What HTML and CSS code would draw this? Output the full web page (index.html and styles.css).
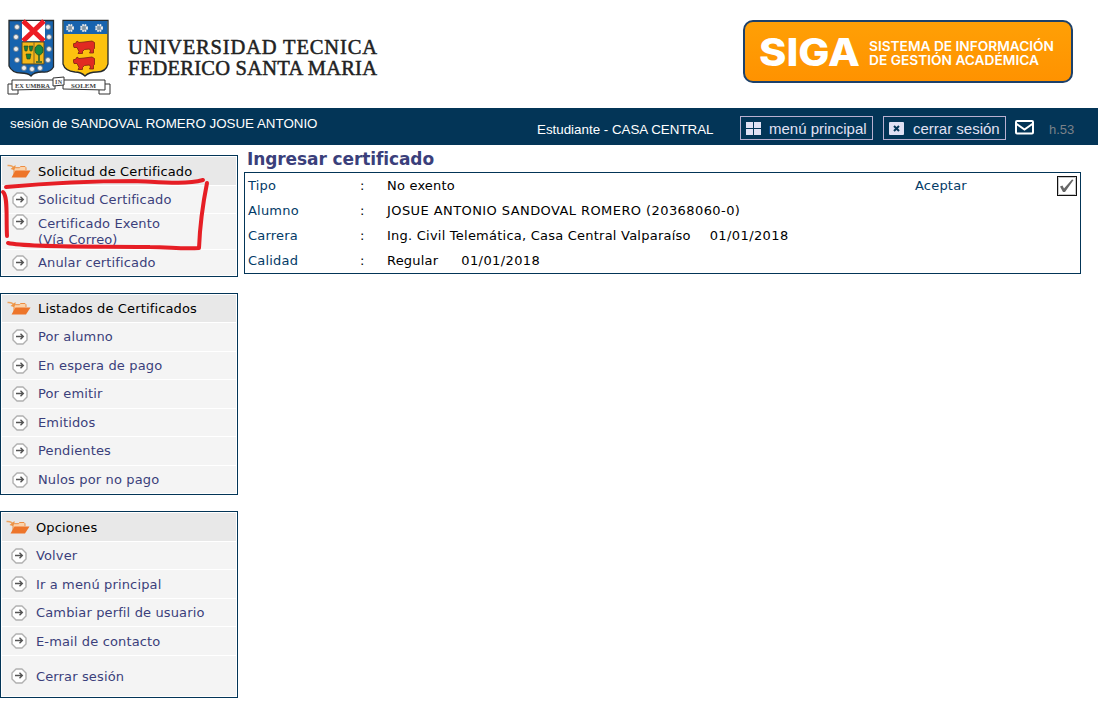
FILE: index.html
```html
<!DOCTYPE html>
<html lang="es">
<head>
<meta charset="utf-8">
<title>SIGA - Ingresar certificado</title>
<link rel="stylesheet" href="styles.css">
</head>
<body>
<svg class="symbols" aria-hidden="true">
  <symbol id="folder" viewBox="0 0 24 15">
    <path d="M.5 1.500q5.500-.5 6.500 3" fill="none" stroke="#eda45f" stroke-width="1.500"/>
    <path d="M8.500 1v5.500L3.500 5z" fill="#ee9445"/>
    <path d="M7 11V4.500l1.500-.8h4l1-1.200h4.500l1 1.200v2.500" fill="#fbd3ab" stroke="#ed8d42" stroke-width="1"/>
    <path d="M4.500 13.500L8.500 6.500h15L19 13.500z" fill="#ed752a"/>
  </symbol>
  <symbol id="arrow" viewBox="0 0 16 16">
    <path d="M5 1h6l4 4v6l-4 4H5l-4-4V5z" fill="#fff" stroke="#b0b0b0" stroke-width="1.400" stroke-linejoin="round"/>
    <path d="M4 7.500h7M8.500 4.700L11.300 7.500l-2.800 2.800" fill="none" stroke="#555" stroke-width="1.400"/>
  </symbol>
  <symbol id="bull" viewBox="0 0 22 14">
    <path d="M0 4l3-1 1-2 2 1.500 5-.5 8-1 2.500 1.500v6l-1 1v3.500h-4l1-2-1-2-5 .5-2 2v2H5l1-2-2-4-3 0z" fill="#e12a22" stroke="#7b2214" stroke-width=".8"/>
  </symbol>
</svg>
<header class="header">
  <svg class="crest" width="104" height="76" viewBox="0 0 104 76">
    <path d="M2 1.500H46.500V48Q43 54 35 53Q27 53 24 57Q21 54 14 54Q5 54 2 47z" fill="#1763ae" stroke="#252a2c" stroke-width="1.300"/>
    <path d="M15 2H38V22H15z" fill="#fff"/>
    <path d="M16 2L37 22M37 2L16 22" stroke="#ed1c24" stroke-width="5"/>
    <path d="M15 23H37V45H15z" fill="#f4b719" stroke="#564b27"/>
    <path d="M27 23V45" stroke="#7e6425"/>
    <path d="M17 27h4l-1 5h-2zM22 27h4l-1 5h-2zM19 35h5l-1 5h-3z" fill="#15813a" stroke="#263f24" stroke-width=".6"/>
    <path d="M32 31V42M29 43h6" stroke="#205c30" stroke-width="1.500"/>
    <ellipse cx="32" cy="31" rx="4" ry="5" fill="#168b43" stroke="#205c30"/>
    <g fill="#eee" stroke="#6d7a84" stroke-width=".8">
      <circle cx="10" cy="8" r="2.500"/><circle cx="9" cy="18" r="2.500"/><circle cx="9" cy="30" r="2.500"/><circle cx="10" cy="41" r="2.500"/><circle cx="17" cy="49" r="2.500"/><circle cx="25" cy="50" r="2.500"/><circle cx="33" cy="49" r="2.500"/><circle cx="41" cy="41" r="2.500"/><circle cx="42" cy="30" r="2.500"/><circle cx="42" cy="18" r="2.500"/><circle cx="41" cy="8" r="2.500"/>
    </g>
    <path d="M56 1.500H101V45Q99 53 90 53Q82 53 78 57Q74 53 68 53Q58 52 56 45z" fill="#fdc20f" stroke="#252a2c" stroke-width="1.300"/>
    <path d="M56.500 2H100.500V15H56.500z" fill="#1763ae"/>
    <g fill="#8296a5" stroke="#eee" stroke-width="2" stroke-dasharray="1.600 .8">
      <circle cx="63" cy="9" r="3"/><circle cx="77" cy="9" r="3"/><circle cx="92" cy="9" r="3"/>
    </g>
    <use href="#bull" x="66" y="21" width="22" height="14"/><use href="#bull" x="66" y="37" width="22" height="14"/>
    <g fill="#fff" stroke="#333">
      <path d="M6 65H1V75H11V71M97 65H103V75H92V71"/>
      <path d="M5 61L48 61V70L5 71zM56 61L98 61V71L56 70z"/>
      <path d="M46 59L57 58V66L46 67z"/>
    </g>
    <g class="motto"><text x="8" y="69" textLength="35" lengthAdjust="spacingAndGlyphs">EX UMBRA</text><text x="48" y="65" textLength="7">IN</text><text x="64" y="69" textLength="25" lengthAdjust="spacingAndGlyphs">SOLEM</text></g>
  </svg>
  <svg class="name" width="252" height="46" viewBox="0 0 252 46">
    <text x="0" y="18" textLength="249">UNIVERSIDAD TECNICA</text>
    <text x="0" y="39" textLength="249">FEDERICO SANTA MARIA</text>
  </svg>
  <svg class="siga" width="330" height="63" viewBox="0 0 330 63">
    <defs><linearGradient id="amber" x2="0" y2="1"><stop stop-color="#ffa006"/><stop offset="1" stop-color="#ff9200"/></linearGradient></defs>
    <rect x="1" y="1" width="328" height="61" rx="9" fill="url(#amber)" stroke="#1d416b" stroke-width="2"/>
    <text class="siga-big" x="16" y="46" textLength="101" lengthAdjust="spacingAndGlyphs">SIGA</text>
    <text class="siga-small" x="126" y="31" textLength="185" lengthAdjust="spacingAndGlyphs">SISTEMA DE INFORMACIÓN</text>
    <text class="siga-small" x="126" y="45" textLength="170" lengthAdjust="spacingAndGlyphs">DE GESTIÓN ACADÉMICA</text>
  </svg>
</header>
<div class="bar">
  <span class="session">sesión de SANDOVAL ROMERO JOSUE ANTONIO</span>
  <span class="role">Estudiante - CASA CENTRAL</span>
  <a class="button home"><svg width="15" height="13" viewBox="0 0 15 13" fill="#e1e1f4"><path d="M0 0h7v6H0zM8 0H15v6H8zM0 7h7V13H0zM8 7H15V13H8z"/></svg><span>menú principal</span></a>
  <a class="button close"><svg width="15" height="13" viewBox="0 0 15 13"><rect width="15" height="13" rx="1" fill="#e1e1f4"/><path d="M5 4l5 5M10 4L5 9" stroke="#033557" stroke-width="2"/></svg><span>cerrar sesión</span></a>
  <svg class="mail" width="19" height="15" viewBox="0 0 19 15" fill="none" stroke="#fff" stroke-width="2"><rect x="1" y="1" width="17" height="12.500" rx="1"/><path d="M1 3.500L9.500 9.500 18 3.500"/></svg>
  <span class="hour">h.53</span>
</div>
<div class="page">
  <nav class="sidebar">
    <div class="menu request">
      <div class="item head"><svg class="folder"><use href="#folder"/></svg><span>Solicitud de Certificado</span></div>
      <a class="item"><svg class="arrow"><use href="#arrow"/></svg><span>Solicitud Certificado</span></a>
      <a class="item two-line"><svg class="arrow"><use href="#arrow"/></svg><span>Certificado Exento<br>(Vía Correo)</span></a>
      <a class="item"><svg class="arrow"><use href="#arrow"/></svg><span>Anular certificado</span></a>
      <svg class="marker" width="212" height="78" viewBox="0 0 212 78"><path d="M6 11C50 7 88 5 135 5C160 6 184 9 203 4M207 7C204 22 200 47 199 72C180 73 170 71 150 71C110 70 30 72 8 67M3 16C8 20 6 40 7 60" fill="none" stroke="#e61e25" stroke-width="4" stroke-linecap="round" stroke-linejoin="round"/></svg>
    </div>
    <div class="menu lists">
      <div class="item head"><svg class="folder"><use href="#folder"/></svg><span>Listados de Certificados</span></div>
      <a class="item"><svg class="arrow"><use href="#arrow"/></svg><span>Por alumno</span></a>
      <a class="item"><svg class="arrow"><use href="#arrow"/></svg><span>En espera de pago</span></a>
      <a class="item"><svg class="arrow"><use href="#arrow"/></svg><span>Por emitir</span></a>
      <a class="item"><svg class="arrow"><use href="#arrow"/></svg><span>Emitidos</span></a>
      <a class="item"><svg class="arrow"><use href="#arrow"/></svg><span>Pendientes</span></a>
      <a class="item"><svg class="arrow"><use href="#arrow"/></svg><span>Nulos por no pago</span></a>
    </div>
    <div class="menu options">
      <div class="item head"><svg class="folder"><use href="#folder"/></svg><span>Opciones</span></div>
      <a class="item"><svg class="arrow"><use href="#arrow"/></svg><span>Volver</span></a>
      <a class="item"><svg class="arrow"><use href="#arrow"/></svg><span>Ir a menú principal</span></a>
      <a class="item"><svg class="arrow"><use href="#arrow"/></svg><span>Cambiar perfil de usuario</span></a>
      <a class="item"><svg class="arrow"><use href="#arrow"/></svg><span>E-mail de contacto</span></a>
      <a class="item"><svg class="arrow"><use href="#arrow"/></svg><span>Cerrar sesión</span></a>
    </div>
  </nav>
  <main class="main">
    <h1>Ingresar certificado</h1>
    <div class="details">
      <span class="label">Tipo</span><span>:</span><span>No exento</span><span class="label">Aceptar</span>
      <svg class="check" width="20" height="20" viewBox="0 0 20 20"><rect x=".5" y=".5" width="19" height="19" fill="#fff" stroke="#111"/><path d="M1.500 18.500V1.500h17v17z" fill="none" stroke="#c8c8c8"/><path d="M3 10.500l2.500-1 1.500 3L15 3.500l1.500.5L8 16H6z" fill="#666"/></svg>
      <span class="label">Alumno</span><span>:</span><span class="wide student">JOSUE ANTONIO SANDOVAL ROMERO (20368060-0)</span>
      <span class="label">Carrera</span><span>:</span><span class="wide career">Ing. Civil Telemática, Casa Central Valparaíso<span class="date">01/01/2018</span></span>
      <span class="label">Calidad</span><span>:</span><span class="wide">Regular<span class="date status-date">01/01/2018</span></span>
    </div>
  </main>
</div>
</body>
</html>
```
FILE: styles.css
```css
* { box-sizing: border-box; }
body { margin: 0; width: 1098px; height: 702px; overflow: hidden; background: #fff; color: #000; font: 13px/16px Verdana, "DejaVu Sans", sans-serif; }
.symbols { display: none; }
.header { height: 108px; display: flex; align-items: flex-start; }
.crest { margin: 19px 0 0 7px; }
.name { margin: 36px 0 0 17px; overflow: visible; }
.name text { font: 20.5px "Liberation Serif", serif; fill: #222; stroke: #222; stroke-width: .5px; }
.motto text { font: bold 6px "Liberation Serif", serif; fill: #444; }
.siga { margin: 20px 25px 0 auto; }
.siga text { fill: #fff; font-family: Inter, sans-serif; }
.siga-big { font-size: 38px; font-weight: 800; }
.siga-small { font-size: 13px; font-weight: 600; }

.bar { height: 37px; background: #033557; color: #fff; display: flex; align-items: flex-start; font: 14px/16px "Liberation Sans", Arial, sans-serif; white-space: nowrap; }
.session { width: 527px; padding: 8px 0 0 10px; font-size: 13.35px; }
.role { width: 203px; padding: 14px 0 0 10px; font-size: 13.35px; }
.button { display: flex; align-items: center; height: 24px; margin: 8px 0 0 10px; border: 1px solid #b9b0d0; color: #e1e1f4; font-size: 15px; }
.button span { padding-top: 1px; }
.home { width: 133px; padding-left: 5px; gap: 8px; }
.close { width: 123px; padding-left: 5px; gap: 9px; }
.mail { margin: 12px 0 0 9px; }
.hour { margin: 14px 0 0 15px; color: #7b8289; font-size: 13px; }

.page { display: flex; }
.sidebar { width: 238px; padding-top: 10px; display: flex; flex-direction: column; gap: 16px; }
.menu { position: relative; display: grid; gap: 1px; padding: 1px; border: 1px solid #033557; background: #fff; color: #3b3f7b; letter-spacing: .14px; }
.request { grid-template-rows: 28px 27px 35px 25px; }
.lists { grid-template-rows: 27px 28px 27px 28px 27px 28px 27px; }
.options { grid-template-rows: 28px 27px 28px 27px 28px 40px; }
.item { display: flex; align-items: center; padding-left: 10px; background: #f4f4f4; white-space: nowrap; }
.head { padding-left: 5px; background: #e8e8e8; color: #000; }
.item span { line-height: 16px; }
.request .head span, .options .item span { padding-top: 1px; }
.folder { width: 24px; height: 15px; margin-right: 7px; }
.arrow { width: 16px; height: 16px; margin-right: 10px; }
.options .item { padding-left: 9px; }
.options .head { padding-left: 4px; }
.options .folder { margin-right: 6px; }
.options .arrow { margin-right: 9px; }
.two-line { align-items: flex-start; }
.two-line span { padding-top: 2px; }
.marker { position: absolute; left: -1px; top: 20px; }

.main { width: 837px; margin-left: 6px; }
h1 { margin: 0; height: 27px; padding: 4px 0 0 3px; color: #3b3f7b; font-size: 17px; line-height: 20px; letter-spacing: -.1px; }
.details { display: grid; grid-template-columns: 112px 27px 528px 142px 20px; grid-template-rows: repeat(4, 25px); align-items: center; height: 102px; padding-left: 3px; border: 1px solid #033557; letter-spacing: .2px; white-space: nowrap; }
.label { color: #033b67; }
.wide { grid-column: span 3; }
.student { letter-spacing: .42px; }
.career { letter-spacing: .23px; }
.date { margin-left: 19px; letter-spacing: .4px; }
.status-date { margin-left: 23px; }
```
